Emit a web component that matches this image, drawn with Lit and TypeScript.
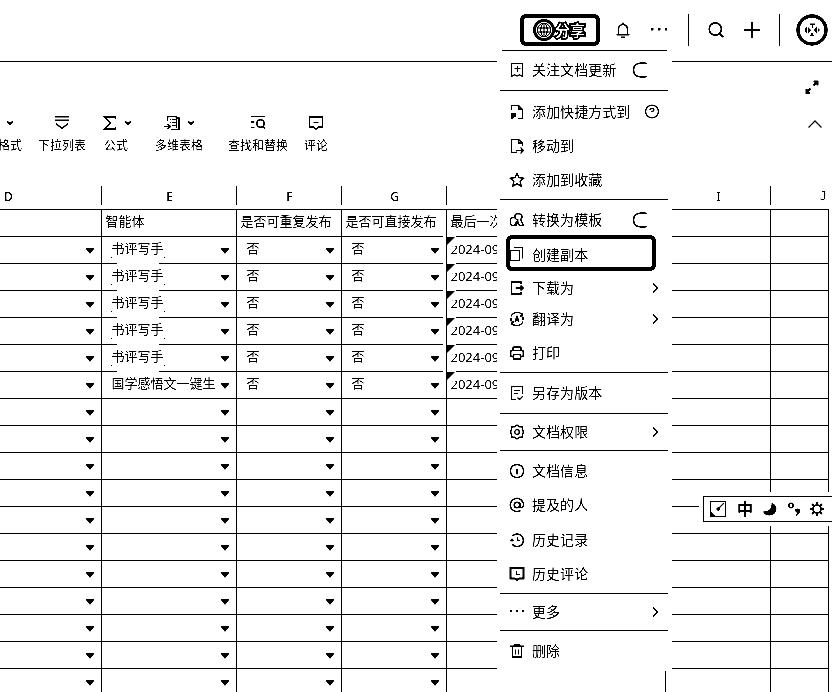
import { LitElement, html, css, svg, nothing } from "lit";
import { customElement } from "lit/decorators.js";

const icons: Record<string, unknown> = {
  follow: svg`<path d="M2.500 1.500h11v13l-3-1.800-2.500 1.300-2.500-1.300-3 1.800zM8.500 4v6M5.500 6.500h6"/>`,
  shortcut: svg`<path stroke-width="1.300" d="M2.500 6V1.500H9.500L13.500 5.500V14.500H9M9.500 1.500V5H13.500"/><path class="fill" d="M2 9h5v4H5l-1 2H2z"/>`,
  move: svg`<path stroke-width="1.300" d="M8 14.500H2.500V1.500H9.500L13.500 5V8M9.500 2V5H13M7 12.500h7M11.500 9.500l3 3-3 3"/>`,
  star: svg`<path stroke-width="1.500" d="M8 1.500l2 4.100 4.600.6-3.400 3.200.9 4.600L8 11.800 3.900 14l.9-4.600L1.400 6.200 6 5.600z"/>`,
  convert: svg`<path stroke-width="1.300" d="M5.500 5.500H4A2.500 2.500 0 0 0 1.500 8v3Q1.500 13.500 4 13.500h1.500M6 6.500V3.500Q6 1.800 8 1.800h2.500q2 0 2.500 2 .5 2.500-1.500 3.500l3 6.200h-4L9 10l-2 3.500H5L9 8 6 6.500"/>`,
  copy: svg`<path d="M1.500 4.500h9v10h-9zM5 1.500h8.500V12.500"/>`,
  download: svg`<path stroke-width="1.600" d="M12 4V2H2.500v12H12v-2M6.500 8H14M11.500 5.500L14 8l-2.500 2.500"/>`,
  translate: svg`<path stroke-width="1.300" d="M2 5.500A6.700 6.700 0 0 1 13.500 4M14 10.500A6.700 6.700 0 0 1 2.500 12M14 6v3M2 7v3M13 2v3h-2M3 14v-3h2M1 8.500h2M13 7.500h2"/><path stroke-width="1.500" d="M6 10.800L8 5.500l2 5.300M6.500 9.200h3"/>`,
  print: svg`<path stroke-width="1.500" d="M4 5V3Q4 2 5 2h6q1 0 1 1v2M4 11.500H2.500Q1.700 11.500 1.700 10.500V6.500Q1.700 5.500 2.700 5.500H13.300Q14.300 5.500 14.300 6.500V10.500Q14.300 11.500 13.500 11.500H12M4.500 9.500h7V14h-7z"/>`,
  version: svg`<path stroke-width="1.300" d="M7 14.500H2.500V1.500H13.500V9M5 5.500h6M5 8.500h4M8.500 12.500l2 2 3.500-3.500"/>`,
  hexgear: svg`<path stroke-width="1.500" d="M8 1.200L10.500 2.700H13.500V5.500L14.500 8 13.500 10.500V13.300H10.500L8 14.800 5.500 13.300H2.500V10.500L1.500 8 2.500 5.500V2.700H5.500z"/><circle cx="8" cy="8" r="2.300" stroke-width="1.300"/>`,
  info: svg`<circle stroke-width="1.500" cx="8" cy="8" r="6.600"/><path stroke-width="1.600" d="M8 6v5.500M7 6.500h1"/>`,
  at: svg`<circle cx="8" cy="8" r="2.800" stroke-width="1.500"/><path stroke-width="1.500" d="M10.800 5.500V9q.3 1.800 2 1.500Q14.500 10 14.500 8a6.600 6.600 0 1 0-3 5.500"/>`,
  history: svg`<path stroke-width="1.500" d="M3.500 4A6.300 6.300 0 1 1 3 12M1 8.500h4M3 6.500v3M8.500 5v3.500H11"/>`,
  hcomment: svg`<path stroke-width="2" d="M1.500 2h13v10.500H10L8 14 6 12.500H1.500z"/><path stroke-width="1.300" d="M7.500 5v3.500h3.500"/>`,
  more: svg`<path class="fill" d="M1 6h2v2H1zM7 6h2v2H7zM13 6h2v2h-2z"/>`,
  trash: svg`<path stroke-width="1.500" d="M1 3.300h14M5.500 3V1.500h5V3M3.500 4v10h9V4"/><path d="M6.500 6.500v5M9.500 6.500v5"/>`,
  bell: svg`<path stroke-width="1.600" d="M1.500 12.700h13M3.500 12.500V7a4.500 4.500 0 0 1 9 0v5.500M6 15.300h4M8 .500v2"/>`,
  search: svg`<circle cx="7.300" cy="7" r="6.100" stroke-width="1.600"/><path stroke-width="1.800" d="M11.500 11.500l3.800 3.500"/>`,
  plus: svg`<path stroke-width="1.900" d="M8 0v16M0 8h16"/>`,
  globe: svg`<circle cx="8" cy="8" r="6.800"/><ellipse cx="8" cy="8" rx="3.200" ry="6.800"/><path d="M8 1v14M1 6h14M1 10h14"/>`,
  down: svg`<path stroke-width="1.600" d="M1 1.700h14M1 5.300h14M2 8.500l6 5 6-5"/>`,
  sigma: svg`<path stroke-width="1.500" d="M13.500 4V2H2.500l6 6-6 6h11v-2"/>`,
  base: svg`<path stroke-width="1.500" d="M3.500 6V1.500h9V13M12.500 3h2.500V14.500H7M0 11.500h6M3.500 9l3 2.500-3 2.500"/><path stroke-width="1.200" d="M6 4.500h1M8 4.500h3.500M6 7.500h1M8 7.500h3.500M8 10.500h3.500"/>`,
  find: svg`<path stroke-width="1.400" d="M1 1.500h14M1 7h3.500M1 12.500h3.500M13 11.500l2 2.500"/><circle cx="10.500" cy="8.500" r="3.700" stroke-width="1.600"/>`,
  comment: svg`<path stroke-width="1.600" d="M1.500 2h13v10H10.500L8 14 5.500 12H1.500zM5.500 7.500h5"/>`,
};

const icon = (name: string, size = 16) =>
  html`<svg class="ic" width=${size} height=${size} viewBox="0 0 16 16">${icons[name]}</svg>`;

type Item = { icon: string; label: string; end?: "switch" | "help" | "arrow"; boxed?: boolean };

const sections: Item[][] = [
  [{ icon: "follow", label: "关注文档更新", end: "switch" }],
  [
    { icon: "shortcut", label: "添加快捷方式到", end: "help" },
    { icon: "move", label: "移动到" },
    { icon: "star", label: "添加到收藏" },
  ],
  [
    { icon: "convert", label: "转换为模板", end: "switch" },
    { icon: "copy", label: "创建副本", boxed: true },
    { icon: "download", label: "下载为", end: "arrow" },
    { icon: "translate", label: "翻译为", end: "arrow" },
    { icon: "print", label: "打印" },
  ],
  [{ icon: "version", label: "另存为版本" }],
  [{ icon: "hexgear", label: "文档权限", end: "arrow" }],
  [
    { icon: "info", label: "文档信息" },
    { icon: "at", label: "提及的人" },
    { icon: "history", label: "历史记录" },
    { icon: "hcomment", label: "历史评论" },
  ],
  [{ icon: "more", label: "更多", end: "arrow" }],
  [{ icon: "trash", label: "删除" }],
];

@customElement("doc-menu")
class DocMenu extends LitElement {
  static styles = css`
    :host { display: block; background: #fff; font-size: 14px; }
    .sec { display: grid; border-top: 1px solid #000; margin: 0 4px 0 3px; }
    .s0 { grid-template-rows: 38px; padding-bottom: 1px; margin: 0 5px; }
    .s0 .item { padding-left: 7px; }
    .s1 { grid-template-rows: 34px 34px 34px; padding: 4px 0 2px; }
    .s2 { grid-template-rows: 34px 34px 34px 28px 39px; padding: 3px 0 0; }
    .s3 { grid-template-rows: 40px; }
    .s4 { grid-template-rows: 36px; }
    .s5 { grid-template-rows: 34px 34px 35px 34px; padding: 3px 0 2px; }
    .s6 { grid-template-rows: 36px; }
    .s7 { grid-template-rows: 40px; }
    .item { position: relative; display: flex; align-items: center; padding-left: 9px; line-height: 20px; white-space: nowrap; }
    .label { margin-left: 7px; letter-spacing: 0.05px; }
    .boxed::after { content: ""; position: absolute; left: 6px; top: -2px; width: 142px; height: 28px; border: 4px solid #000; border-radius: 6px; }
    .boxed .label { position: relative; top: 1px; }
    svg { display: block; flex: none; fill: none; stroke: #000; stroke-width: 1.200; }
    .ic { width: 16px; height: 16px; }
    .fill { fill: #000; stroke: none; }
    .switch { margin-left: auto; margin-right: 21px; }
    .s0 .switch { margin-right: 20px; }
    .help { margin-left: 14px; }
    .arrow { margin-left: auto; margin-right: 9px; }
  `;
  end(kind?: string) {
    if (kind === "switch")
      return html`<svg class="switch" width="15" height="16" viewBox="0 0 15 16"><path stroke-width="1.600" d="M14.500 2Q14 1 12 1H9Q1.500 1.500 1.500 8T9 15H12Q14 15 14.500 14"/></svg>`;
    if (kind === "help")
      return html`<svg class="help" width="16" height="16" viewBox="0 0 16 16"><circle cx="8" cy="7.500" r="6.400" stroke-width="1.300"/><path stroke-width="1.300" d="M6 6Q6 4.500 8 4.500T10 6Q10 7 8 7.500V8.500M8 9.500v1"/></svg>`;
    if (kind === "arrow")
      return html`<svg class="arrow" width="8" height="12" viewBox="0 0 8 12"><path stroke-width="1.500" d="M2 1.500L6.500 6 2 10.500"/></svg>`;
    return nothing;
  }
  render() {
    return sections.map((s, i) => html`<div class="sec s${i}">${s.map(
      (it) => html`<div class="item ${it.boxed ? "boxed" : ""}">${icon(it.icon)}<span class="label">${it.label}</span>${this.end(it.end)}</div>`
    )}</div>`);
  }
}

const letters = ["D", "E", "F", "G", "", "I", "J"];
const tools = [
  { icon: "", label: "格式", caret: true },
  { icon: "down", label: "下拉列表" },
  { icon: "sigma", label: "公式", caret: true },
  { icon: "base", label: "多维表格", caret: true },
  { icon: "find", label: "查找和替换" },
  { icon: "comment", label: "评论" },
];
const agents = ["书评写手", "书评写手", "书评写手", "书评写手", "书评写手", "国学感悟文一键生"];

@customElement("app-root")
class AppRoot extends LitElement {
  static styles = css`
    :host { display: block; position: relative; width: 832px; height: 692px; overflow: hidden; background: #fff; color: #000; filter: contrast(3);
      font-family: "Noto Sans", "Noto Sans CJK SC", sans-serif; }
    svg { display: block; flex: none; fill: none; stroke: #000; stroke-width: 1.200; }
    .fill { fill: #000; stroke: none; }
    .top { display: flex; align-items: center; justify-content: flex-end; box-sizing: border-box; padding: 0 4px 2px 0; border-bottom: 1px solid #000; height: 62px; }
    .share { display: flex; align-items: center; box-sizing: border-box; width: 80px; height: 32px; border: 4px solid #000; border-radius: 6px; padding-left: 9px; margin-right: 15px; }
    .globe { box-sizing: border-box; width: 22px; height: 22px; border-radius: 50%; background: #000; padding: 3px; }
    .globe svg { stroke: #000; background: #fff; border-radius: 50%; stroke-width: 1; width: 16px; height: 16px; }
    .share b { font-size: 15px; line-height: 20px; color: #fff; font-weight: 500; -webkit-text-stroke: 3.500px #000; paint-order: stroke fill; margin-left: 0; }
    .dots { margin: 0 21px 0 20px; }
    .bar { width: 1px; height: 32px; background: #000; }
    .search { margin: 0 20px 0 19px; }
    .plus { margin-right: 19px; }
    .avatar { margin-left: 16px; }
    .tools { position: relative; display: grid; grid-template-columns: 38px 66px 51px 73px 76px 40px; height: 123px; box-sizing: border-box; padding-top: 53px; font-size: 12px; line-height: 18px; }
    .tool { display: flex; flex-direction: column; justify-self: start; align-items: center; width: max-content; white-space: nowrap; }
    .row1 { display: flex; align-items: center; height: 16px; margin-bottom: 6px; }
    .caret { margin-left: 6px; }
    .t0 { margin-left: -2px; }
    .t0 .row1 { align-self: flex-end; margin-right: 8px; }
    .t2 { width: 24px; align-items: flex-start; }
    .t2 .row1 { margin-left: -2px; }
    .t3 .caret { margin-left: 7px; }
    .side { position: absolute; right: 9px; top: 18px; display: flex; flex-direction: column; align-items: flex-end; gap: 25px; }
    .expand { margin-right: 4px; }
    .sheet { display: grid; grid-template-columns: 102px 135px 105px 105px 219px 105px 58px; grid-template-rows: 25px repeat(18, 27px); }
    .cell { position: relative; box-sizing: border-box; border-right: 1px solid #000; border-bottom: 1px solid #000; font-size: 13px; line-height: 23px; padding-left: 3.500px; white-space: nowrap; }
    .cell.opt { padding-left: 9.500px; line-height: 22px; }
    .head { text-align: center; padding: 0; font-size: 12px; font-weight: 500; line-height: 23px; border-right-width: 0; }
    .head::after { content: ""; position: absolute; right: 0; top: 1px; width: 1px; height: 19px; background: #000; }
    .head.c0 { text-align: left; padding-left: 4px; }
    .head.c6 { text-align: right; padding-right: 2px; font-family: "DejaVu Sans Mono", monospace; }
    .head.c6::after { display: none; }
    .tri { position: absolute; right: 7px; top: 11px; width: 8px; height: 6px; background: #000; clip-path: polygon(0 0, 100% 0, 100% 15%, 50% 100%, 0 15%); }
    .pill { position: absolute; z-index: 1; left: 15px; bottom: -1px; width: 42px; height: 1px; background: #fff; }
    .pill::before, .pill::after { content: ""; position: absolute; top: -6px; width: 1px; height: 1px; background: #000; }
    .pill::before { left: -6px; }
    .pill::after { right: -6px; }
    .note { position: absolute; left: -4px; top: -2px; width: 13px; height: 11px; background: linear-gradient(#fff, #fff) left / 3px 100% no-repeat, linear-gradient(#fff, #fff) 4px 0 / 9px 100% no-repeat; }
    .note i { position: absolute; left: 4px; top: 2px; width: 8px; height: 8px; background: #000; clip-path: polygon(0 0, 100% 0, 0 100%); }
    .date { line-height: 24px; }
    .menu { position: absolute; left: 497px; top: 50px; width: 175px; height: 621px; }
    .ime { position: absolute; left: 703px; top: 496px; width: 140px; height: 24px; border: 1px solid #000; background: #fff; box-shadow: 0 0 0 4px #fff; display: flex; align-items: center; padding-left: 6px; font-size: 16px; font-weight: 700; }
    .zh { margin: 0 10px 0 11px; line-height: 22px; }
    .moon { margin-right: 11px; }
    .punct { margin-right: 8px; }
  `;
  caret() {
    return html`<svg class="caret" width="8" height="6" viewBox="0 0 8 6"><path stroke-width="1.800" d="M1 1.500l3 2.500 3-2.500"/></svg>`;
  }
  cell(r: number, c: number) {
    if (r === 0) {
      const t = ["", "智能体", "是否可重复发布", "是否可直接发布", "最后一次", "", ""][c];
      return html`<div class="cell">${t}</div>`;
    }
    const filled = r <= 6;
    if (c <= 3) {
      const text = !filled || c === 0 ? "" : c === 1 ? agents[r - 1] : "否";
      return html`<div class="cell opt">${text}${c === 1 && r <= 5 ? html`<i class="pill"></i>` : nothing}<i class="tri"></i></div>`;
    }
    if (c === 4 && filled) return html`<div class="cell date"><span class="note"><i></i></span>2024-09</div>`;
    return html`<div class="cell"></div>`;
  }
  render() {
    return html`
      <div class="top">
        <div class="share"><span class="globe">${icon("globe")}</span><b>分享</b></div>
        ${icon("bell")}
        <svg class="dots" width="16" height="16" viewBox="0 0 16 16"><path class="fill" d="M0 6h2.500v2.500H0zM7 6h2.500v2.500H7zM14 6h2v2.500h-2z"/></svg>
        <span class="bar"></span>
        <span class="search">${icon("search")}</span>
        <span class="plus">${icon("plus")}</span>
        <span class="bar"></span>
        <svg class="avatar" width="32" height="32" viewBox="0 0 32 32"><circle cx="16" cy="16" r="14" stroke-width="3.400"/><path class="fill" d="M9 15l2-3v8l-2-3zM12 13l3 3-3 4zM14 9.500h5v1.500h-2v3h-1v-3h-2zM14 22l2-4 2 4h-4zM18 16l3-4v8zM22 14l2 2-2 2z"/></svg>
      </div>
      <div class="tools">
        ${tools.map((t, i) => html`<div class="tool t${i}"><div class="row1">${t.icon ? icon(t.icon) : nothing}${t.caret ? this.caret() : nothing}</div><span>${t.label}</span></div>`)}
        <div class="side">
          <svg class="expand" width="14" height="15" viewBox="0 0 14 15"><path stroke-width="2" d="M8.500 5.500l4-4M8.500 1.500h4V5.500M5.500 8.500l-4 4M1.500 9v4H5"/></svg>
          <svg width="15" height="8" viewBox="0 0 15 8"><path stroke-width="1.400" d="M.5 7.500l6.500-6.500 6.500 6.500"/></svg>
        </div>
      </div>
      <div class="sheet">
        ${letters.map((l, i) => html`<div class="cell head c${i}">${l}</div>`)}
        ${Array.from({ length: 18 }, (_, r) => letters.map((_, c) => this.cell(r, c)))}
      </div>
      <doc-menu class="menu"></doc-menu>
      <div class="ime">
        <svg width="16" height="16" viewBox="0 0 16 16"><path d="M.5.500h15v15H.5z"/><path class="fill" d="M0 9l3 4 4 3H0zM6 8l2-2 2 1v2L8 10z"/><path d="M8 8l6-6"/></svg>
        <span class="zh">中</span>
        <svg class="moon" width="14" height="14" viewBox="0 0 14 14"><path class="fill" d="M8.500 .500Q13.500 2.500 13.500 7q-1 6.500-7 6.500-5 0-6.500-4Q9.500 9.500 8.500.500z"/></svg>
        <svg class="punct" width="14" height="14" viewBox="0 0 14 14"><circle cx="3" cy="3.500" r="2.200" stroke-width="1.600"/><path class="fill" d="M7 7.500q2.500-2 5 0 .5 4.500-4 6.500v-1l1.500-2q-2.500-.7-2.500-3.500z"/></svg>
        <svg width="14" height="14" viewBox="0 0 14 14"><circle cx="7" cy="7" r="4" stroke-width="1.700"/><path stroke-width="2" d="M7 0v3M7 11v3M0 7h3M11 7h3M2 2l2 2M10 10l2 2M2 12l2-2M10 4l2-2"/><circle cx="7" cy="7" r="3" fill="#fff" stroke="none"/></svg>
      </div>
    `;
  }
}
